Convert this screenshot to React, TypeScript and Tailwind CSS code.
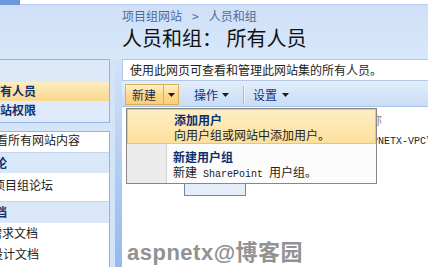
import React from "react";

function Caret() {
  return (
    <svg width="7" height="4" viewBox="0 0 7 4" className="shrink-0">
      <polygon points="0,0 7,0 3.5,4" fill="#1a1a1a" />
    </svg>
  );
}

export default function App() {
  return (
    <div className="relative w-[428px] h-[267px] overflow-hidden bg-white text-[12px] leading-[14px] text-[#222] font-['Noto_Sans_CJK_SC','Liberation_Sans',sans-serif]">
      {/* top strip */}
      <div className="flex h-[5px]">
        <div className="w-[20px] bg-[#6a98d8]" />
        <div className="flex-1 bg-white border-b border-[#b7cdee]" />
      </div>

      {/* header */}
      <div className="h-[54px] bg-gradient-to-b from-[#cfe0f7] to-[#d8e7fa] pl-[122px] pt-[4px]">
        <div className="flex gap-[10px] text-[12px] leading-[14px] text-[#4d6a9c]">
          <span>项目组网站</span>
          <span>&gt;</span>
          <span>人员和组</span>
        </div>
        <div className="mt-[3px] text-[20px] leading-[24px] text-[#111] whitespace-pre">人员和组： 所有人员</div>
      </div>

      {/* body */}
      <div className="flex h-[208px]">
        {/* left nav */}
        <div className="w-[110px] shrink-0 bg-[#d5e5f9] overflow-hidden">
          <div className="h-[64px] border-y border-r border-[#93b4df] bg-[#dce9f9] flex flex-col">
            <div className="h-[22px]" />
            <div className="h-[19px] pt-[2px] bg-gradient-to-b from-[#fdedc0] to-[#f9d88c] font-bold text-[#13306c] whitespace-nowrap">
              <span className="ml-[-12px]">所有人员</span>
            </div>
            <div className="flex-1 pt-[2px] bg-[#dfeafa] font-bold text-[#13306c] whitespace-nowrap">
              <span className="ml-[-12px]">网站权限</span>
            </div>
          </div>
          <div className="h-[8px]" />
          <div className="h-[140px] border-t border-r border-[#93b4df] bg-white flex flex-col whitespace-nowrap">
            <div className="h-[20px] pt-[1px]"><span className="ml-[-16px]">查看所有网站内容</span></div>
            <div className="h-[21px] pt-[3px] border-t border-[#c3d6ef] bg-[#dae7f8] font-bold text-[#13306c]"><span className="ml-[-17px]">讨论</span></div>
            <div className="h-[28px] pt-[5px]"><span className="ml-[-7px]">项目组论坛</span></div>
            <div className="h-[22px] pt-[3px] border-t border-[#c3d6ef] bg-[#dae7f8] font-bold text-[#13306c]"><span className="ml-[-17px]">文档</span></div>
            <div className="h-[21px] pt-[3px]"><span className="ml-[-10px]">需求文档</span></div>
            <div className="h-[21px] pt-[3px]"><span className="ml-[-9px]">设计文档</span></div>
          </div>
        </div>

        {/* divider strip */}
        <div className="w-[12px] shrink-0 flex">
          <div className="w-[5px] bg-[#d3e3f8]" />
          <div className="flex-1 bg-gradient-to-b from-[#d3e3f8] via-[#b3cef2] to-[#94b9ec]" />
        </div>

        {/* main */}
        <div className="flex-1 flex flex-col bg-white">
          <div className="h-[22px] border-y border-l border-[#b1c8e8] pl-[7px] pt-[3px] whitespace-nowrap text-[#222]">
            使用此网页可查看和管理此网站集的所有人员。
          </div>
          <div className="h-[26px] flex items-start bg-gradient-to-b from-[#e3eefb] to-[#c9dcf5] border-b border-[#a9c4e8] pl-[3px] pt-[3px] whitespace-nowrap">
            <div className="flex h-[21px] border border-[#d9ae5a] bg-gradient-to-b from-[#fff1c8] via-[#fdd98d] to-[#fbcf78]">
              <div className="w-[37px] flex items-center pl-[6px] text-[#1b2f55]">新建</div>
              <div className="w-[15px] flex items-center justify-center border-l border-[#d9ae5a]">
                <Caret />
              </div>
            </div>
            <div className="ml-[15px] h-[21px] flex items-center gap-[4px] text-[#10357a]">
              <span>操作</span>
              <Caret />
            </div>
            <div className="ml-[14px] mt-[2px] h-[18px] w-[2px] border-l border-[#9fbbe2] bg-white/60" />
            <div className="ml-[8px] h-[21px] flex items-center gap-[5px] text-[#10357a]">
              <span>设置</span>
              <Caret />
            </div>
          </div>
          {/* list behind menu */}
          <div className="h-[22px] pl-[236px] pt-[6px] text-[#8a8a8a] whitespace-nowrap">名称</div>
          <div className="h-[22px] pl-[238px] pt-[7px] whitespace-nowrap text-[10px] leading-[12px] text-[#222] font-['Liberation_Mono',monospace]">
            ASPNETX-VPC\Administrator
          </div>
        </div>
      </div>

      {/* box partly hidden behind menu */}
      <div className="absolute left-[184px] top-[176px] w-[62px] h-[20px] bg-[#e5edf9] border border-[#7186ad]" />

      {/* dropdown menu */}
      <div className="absolute left-[126px] top-[108px] w-[251px] h-[76px] border border-[#878787] bg-[#fcfcfc] flex flex-col">
        <div className="h-[35px] bg-gradient-to-b from-[#feeec4] to-[#fcdf9c] border border-[#e6c679] pl-[46px] pt-[2px] whitespace-nowrap">
          <div className="font-bold text-[#0b2f6e] leading-[15px]">添加用户</div>
          <div className="leading-[15px] text-[#222]">向用户组或网站中添加用户。</div>
        </div>
        <div className="flex-1 flex">
          <div className="w-[40px] bg-[#ebebeb] border-r border-[#d2d2d2]" />
          <div className="pl-[6px] pt-[5px] whitespace-nowrap">
            <div className="font-bold text-[#0b2f6e] leading-[15px]">新建用户组</div>
            <div className="leading-[15px] text-[#222] flex items-baseline">
              <span>新建</span>
              <span className="ml-[6px] text-[10px] font-['Liberation_Mono',monospace]">SharePoint</span>
              <span className="ml-[6px]">用户组。</span>
            </div>
          </div>
        </div>
      </div>

      {/* watermark */}
      <div className="absolute left-[127px] top-[240px] text-[22px] leading-[26px] font-bold tracking-[0.5px] text-[#929292] whitespace-nowrap font-['Liberation_Sans','Noto_Sans_CJK_SC',sans-serif] [text-shadow:1px_1px_0_#fff,-1px_-1px_0_#fff,1px_-1px_0_#fff,-1px_1px_0_#fff]">
        aspnetx@博客园
      </div>
    </div>
  );
}
